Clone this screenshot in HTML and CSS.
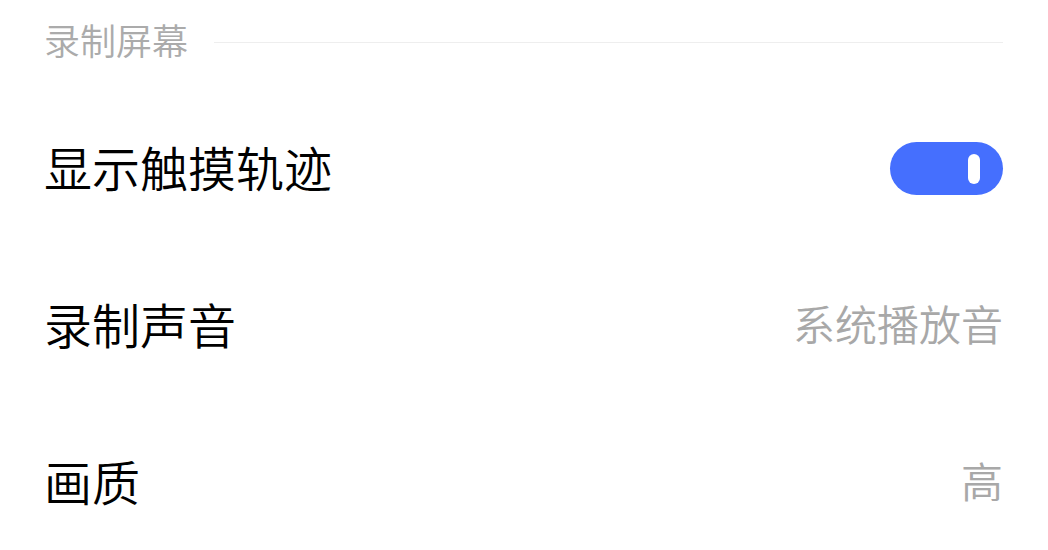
FILE: index.html
```html
<!DOCTYPE html>
<html lang="zh-CN">
<head>
<meta charset="utf-8">
<title>录制屏幕</title>
<link rel="stylesheet" href="styles.css">
</head>
<body>
<div class="page">
  <div class="section-header">
    <span class="section-title">录制屏幕</span>
    <span class="section-line"></span>
  </div>
  <div class="row">
    <span class="label">显示触摸轨迹</span>
    <span class="toggle on"><span class="knob"></span></span>
  </div>
  <div class="row">
    <span class="label">录制声音</span>
    <span class="value">系统播放音</span>
  </div>
  <div class="row">
    <span class="label">画质</span>
    <span class="value">高</span>
  </div>
</div>
</body>
</html>
```

FILE: styles.css
```css
html, body {
  margin: 0;
  padding: 0;
  background: #ffffff;
}

body {
  font-family: "Noto Sans CJK SC", "Noto Sans", sans-serif;
  width: 1048px;
  height: 550px;
  overflow: hidden;
}

.page {
  display: flex;
  flex-direction: column;
  padding: 0 45px 0 44px;
}

.section-header {
  display: flex;
  align-items: center;
  gap: 26px;
  height: 78px;
  margin-bottom: 9px;
}

.section-title {
  font-size: 36px;
  font-weight: 350;
  color: #ababab;
  line-height: 1;
  white-space: nowrap;
}

.section-line {
  flex: 1;
  height: 1px;
  background: #eeeeee;
  margin-top: 6px;
}

.row {
  display: flex;
  align-items: center;
  justify-content: space-between;
  height: 157px;
}

.label {
  font-size: 48px;
  font-weight: 350;
  color: #000000;
  line-height: 1;
}

.value {
  font-size: 42px;
  font-weight: 350;
  color: #a8a8a8;
  line-height: 1;
}

.toggle {
  display: flex;
  align-items: center;
  justify-content: flex-end;
  box-sizing: border-box;
  width: 113px;
  height: 53px;
  border-radius: 27px;
  padding-right: 23px;
  background: #456ffe;
  margin-top: 6px;
}

.knob {
  width: 12px;
  height: 30px;
  border-radius: 6px;
  background: #ffffff;
}
```
